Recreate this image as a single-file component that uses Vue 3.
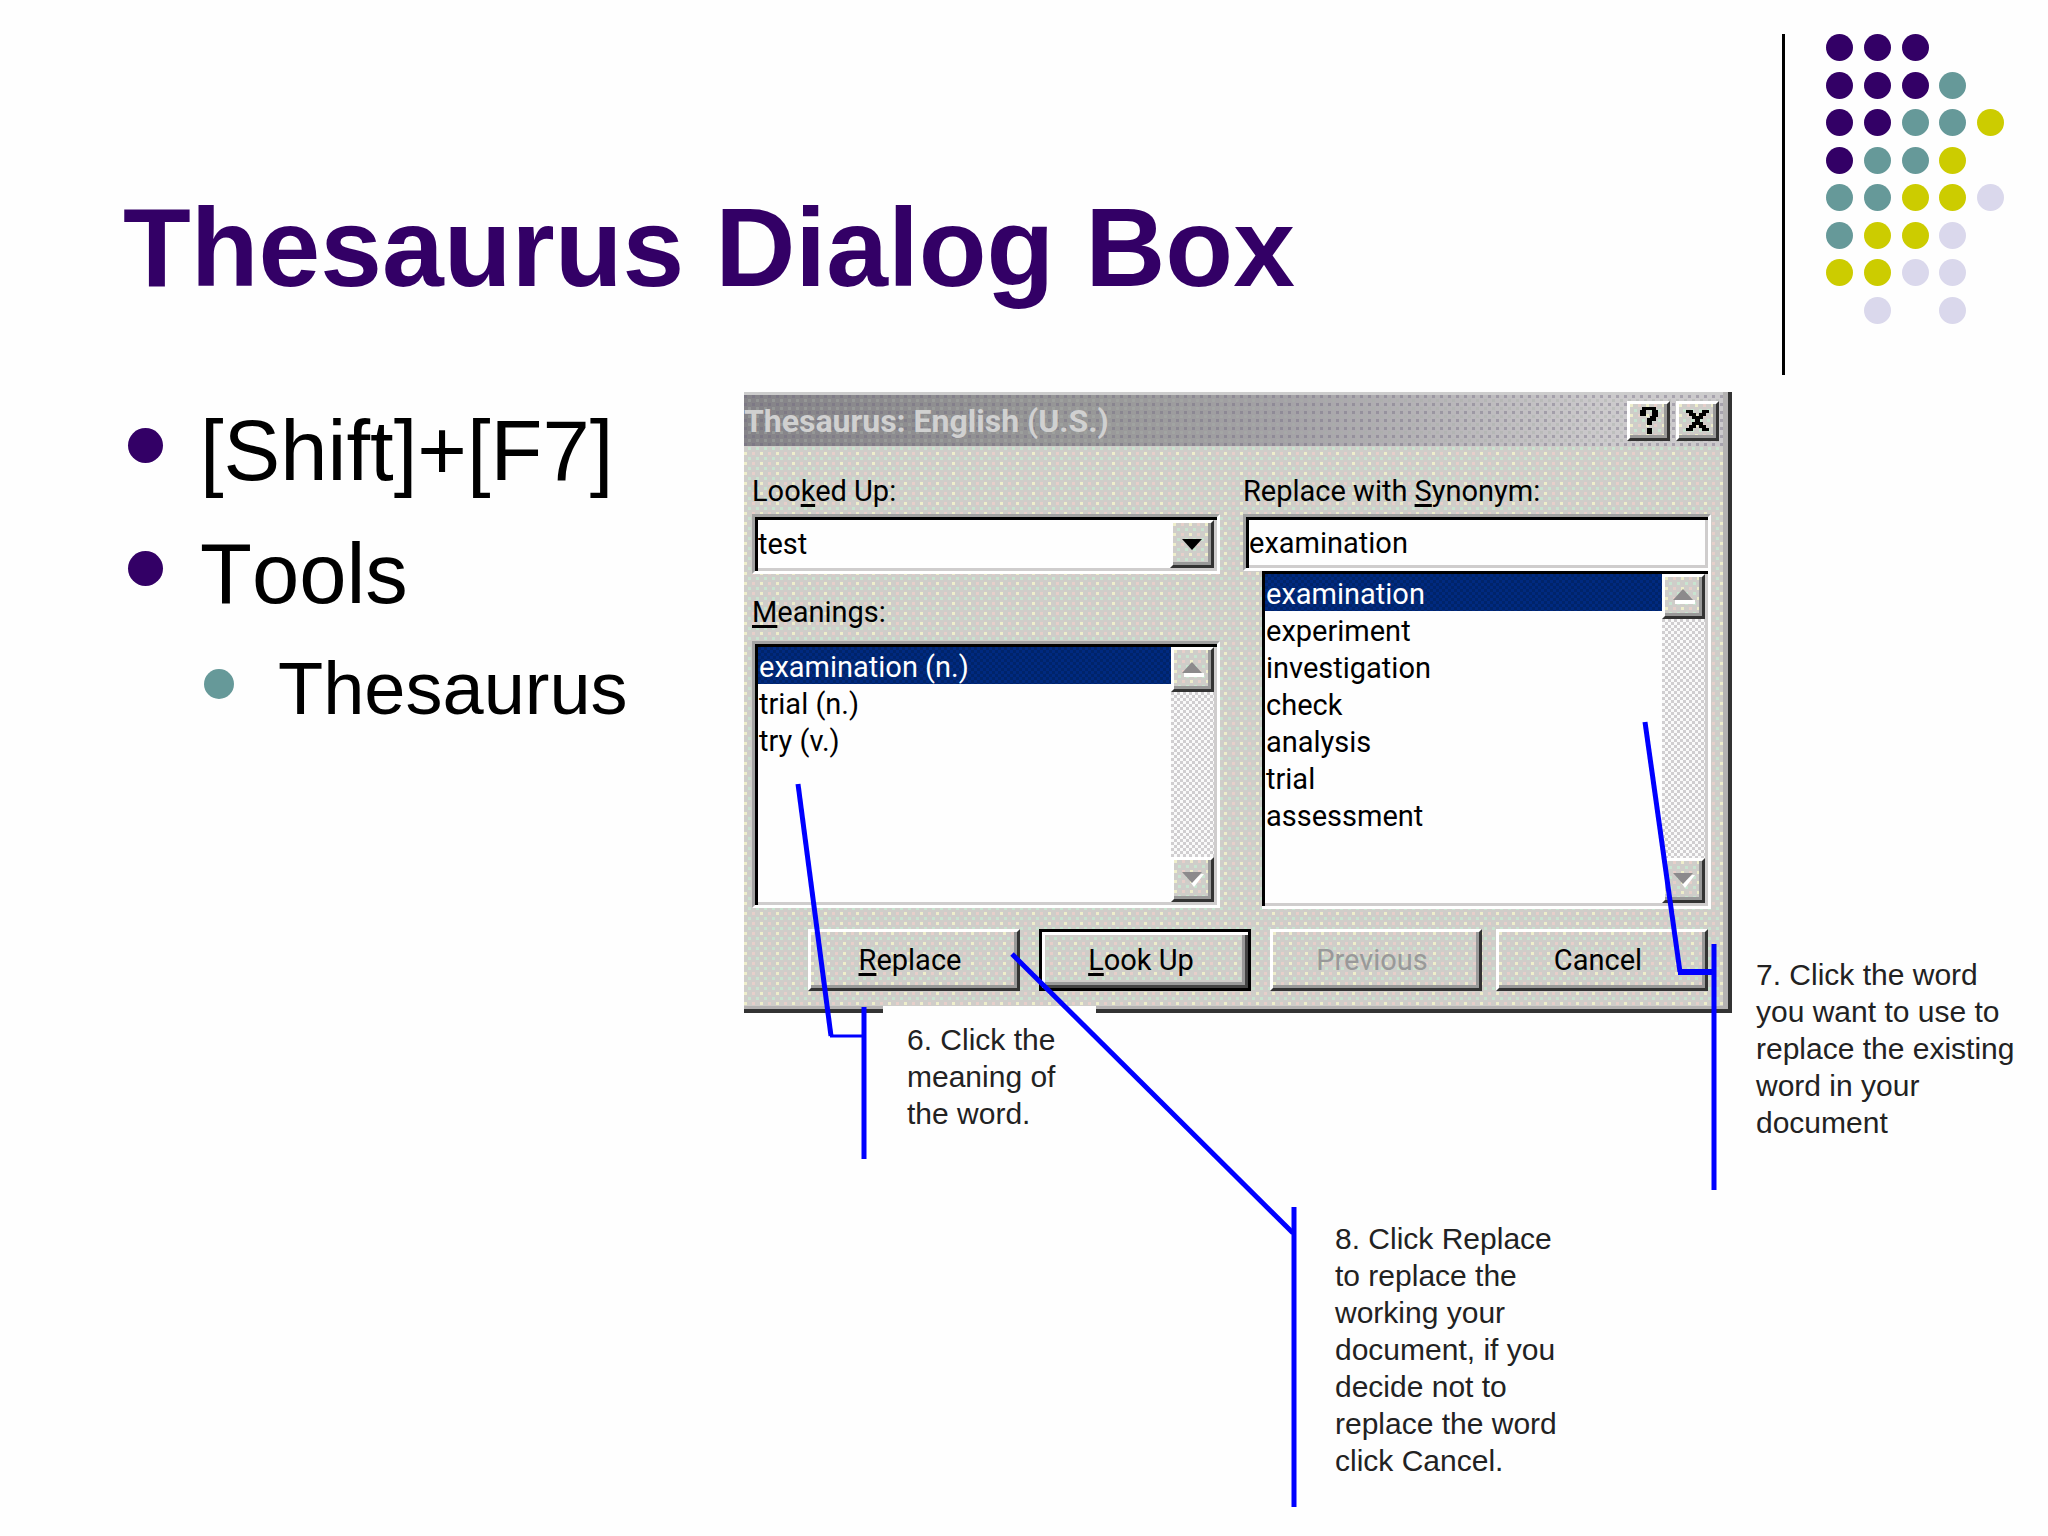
<script setup>
import { ref } from 'vue'

// p = purple, t = teal, y = yellow, l = lavender, '.' = empty cell
const dotRows = ['ppp..', 'pppt.', 'pptty', 'ptty.', 'ttyyl', 'tyyl.', 'yyll.', '.l.l.']
const dots = dotRows.join('').split('')

const meanings = ['examination (n.)', 'trial (n.)', 'try (v.)']
const synonyms = ['examination', 'experiment', 'investigation', 'check', 'analysis', 'trial', 'assessment']

const lookedUp = ref('test')
const meaning = ref(meanings[0])
const replacement = ref(synonyms[0])
</script>

<template>
  <main class="slide">
    <header class="head">
      <h1>Thesaurus Dialog Box</h1>
      <div class="ornament" aria-hidden="true">
        <div class="dots">
          <span v-for="(d, i) in dots" :key="i" class="dot" :class="'dot-' + d"></span>
        </div>
      </div>
    </header>

    <section class="content">
      <ul class="points">
        <li>[Shift]+[F7]</li>
        <li>
          Tools
          <ul class="subpoints">
            <li>Thesaurus</li>
          </ul>
        </li>
      </ul>

      <div class="figure">
        <form class="dialog" @submit.prevent>
          <div class="titlebar">
            <span class="caption">Thesaurus: English (U.S.)</span>
            <button type="button" class="raised tool" aria-label="Help">
              <svg viewBox="0 0 16 24" width="18" height="27" shape-rendering="crispEdges">
                <path d="M2 0h12v3h2v6h-2v3h-3v4H6v-6h3V8h2V3H5v5H0V3h2zM6 19h5v5H6z" />
              </svg>
            </button>
            <button type="button" class="raised tool" aria-label="Close">
              <svg viewBox="0 0 24 21" width="23" height="21" shape-rendering="crispEdges">
                <path d="M0 0h7v3h3v3h4V3h3V0h7v3h-3v3h-3v3h-3v3h3v3h3v3h3v3h-7v-3h-3v-3h-4v3H7v3H0v-3h3v-3h3v-3h3V9H6V6H3V3H0z" />
              </svg>
            </button>
          </div>

          <div class="columns">
            <div class="column">
              <label for="looked">Loo<u>k</u>ed Up:</label>
              <div class="sunken combo">
                <select id="looked" v-model="lookedUp">
                  <option>test</option>
                </select>
                <span class="raised drop" aria-hidden="true">
                  <svg viewBox="0 0 20 11" width="20" height="11"><path d="M0 0h20L10 11z" /></svg>
                </span>
              </div>
              <span id="meanings-label" class="label second"><u>M</u>eanings:</span>
              <div class="sunken list">
                <ul role="listbox" aria-labelledby="meanings-label">
                  <li
                    v-for="m in meanings"
                    :key="m"
                    role="option"
                    :aria-selected="m === meaning"
                    :class="{ selected: m === meaning }"
                    @click="meaning = m"
                  >{{ m }}</li>
                </ul>
                <div class="scroll">
                  <button type="button" class="raised" aria-label="Scroll meanings up">
                    <svg viewBox="0 0 22 15" width="22" height="15"><path class="lit" d="M2 11h20v4H2z" /><path d="M0 11 10 0l10 11z" /></svg>
                  </button>
                  <button type="button" class="raised" aria-label="Scroll meanings down">
                    <svg viewBox="0 0 22 15" width="22" height="15"><path class="lit" d="M22 2 12 15l-3-4 10-9z" /><path d="M0 0h20L10 11z" /></svg>
                  </button>
                </div>
              </div>
            </div>

            <div class="column">
              <label for="synonym">Replace with <u>S</u>ynonym:</label>
              <input id="synonym" v-model="replacement" class="sunken" type="text" />
              <div class="sunken list nested">
                <ul role="listbox" aria-label="Synonyms">
                  <li
                    v-for="s in synonyms"
                    :key="s"
                    role="option"
                    :aria-selected="s === replacement"
                    :class="{ selected: s === replacement }"
                    @click="replacement = s"
                  >{{ s }}</li>
                </ul>
                <div class="scroll">
                  <button type="button" class="raised" aria-label="Scroll synonyms up">
                    <svg viewBox="0 0 22 15" width="22" height="15"><path class="lit" d="M2 11h20v4H2z" /><path d="M0 11 10 0l10 11z" /></svg>
                  </button>
                  <button type="button" class="raised" aria-label="Scroll synonyms down">
                    <svg viewBox="0 0 22 15" width="22" height="15"><path class="lit" d="M22 2 12 15l-3-4 10-9z" /><path d="M0 0h20L10 11z" /></svg>
                  </button>
                </div>
              </div>
            </div>
          </div>

          <div class="actions">
            <button type="button" class="raised"><u>R</u>eplace</button>
            <button type="submit" class="raised default"><u>L</u>ook Up</button>
            <button type="button" class="raised" disabled>Previous</button>
            <button type="button" class="raised cancel">Cancel</button>
          </div>
        </form>

        <p class="callout meaning-note">6. Click the<br />meaning of<br />the word.</p>
        <p class="callout word-note">7. Click the word<br />you want to use to<br />replace the existing<br />word in your<br />document</p>
        <p class="callout replace-note">8. Click Replace<br />to replace the<br />working your<br />document, if you<br />decide not to<br />replace the word<br />click Cancel.</p>

        <svg class="pointers" viewBox="0 0 1304 1120" width="1304" height="1120" aria-hidden="true">
          <path d="M54 392 87 644" stroke-width="5" />
          <path d="M86 644H119" stroke-width="3" />
          <path d="M120 615V767" stroke-width="5" />
          <path d="M901 330 936 580" stroke-width="5" />
          <path d="M934 580H970" stroke-width="6" />
          <path d="M970 552V798" stroke-width="5" />
          <path d="M268 562 549 841" stroke-width="5" />
          <path d="M550 815V1115" stroke-width="5" />
        </svg>
      </div>
    </section>
  </main>
</template>

<style>
body {
  margin: 0;
  background: #fefefe;
}
</style>

<style scoped>
.slide {
  min-height: 100vh;
  box-sizing: border-box;
  font-family: "Liberation Sans", Arial, sans-serif;
  color: #000;
}

ul {
  list-style: none;
  margin: 0;
  padding: 0;
}

.head {
  display: flex;
  justify-content: space-between;
  align-items: flex-start;
  padding: 34px 44px 17px 123px;
}

h1 {
  margin: 158px 0 0;
  font-size: 111px;
  line-height: 112px;
  font-weight: 700;
  color: #330066;
}

.ornament {
  height: 341px;
  padding-left: 41px;
  border-left: 3px solid #000;
}

.dots {
  display: grid;
  grid-template-columns: repeat(5, 27px);
  justify-content: space-between;
  align-content: space-between;
  width: 178px;
  height: 290px;
}

.dot {
  width: 27px;
  height: 27px;
  border-radius: 50%;
}
.dot-p { background: #330066; }
.dot-t { background: #669999; }
.dot-y { background: #cccc00; }
.dot-l { background: #dad8ec; }

.content {
  display: grid;
  grid-template-columns: minmax(0, 1fr) 1304px;
}

.points {
  padding: 9px 0 0 128px;
  font-size: 85px;
  line-height: 100px;
  font-kerning: none;
}
.points li {
  position: relative;
  padding-left: 72px;
}
.points > li + li {
  margin-top: 23px;
}
.points li::before {
  content: "";
  position: absolute;
  left: 0;
  top: 27px;
  width: 35px;
  height: 35px;
  border-radius: 50%;
  background: #330066;
}
.points .subpoints {
  margin-top: 23px;
  font-size: 74px;
  line-height: 84px;
}
.points .subpoints li {
  margin-left: 4px;
  padding-left: 74px;
}
.points .subpoints li::before {
  top: 22px;
  width: 30px;
  height: 30px;
  background: #669999;
}

.figure {
  position: relative;
  min-height: 1120px;
}

/* Dialog surfaces share a dithered grey */
.dialog,
.raised {
  background-color: #cfcdc9;
  background-image:
    conic-gradient(from 270deg at 3px 3px, #eeeecb 90deg, transparent 0),
    conic-gradient(from 270deg at 3px 3px, #e6cfca 90deg, transparent 0),
    conic-gradient(from 270deg at 3px 3px, #c8e4d0 90deg, transparent 0);
  background-size: 16px 10px, 16px 10px, 8px 10px;
  background-position: 0 0, 8px 0, 4px 5px;
}

.dialog {
  width: 988px;
  box-sizing: border-box;
  border: solid #333;
  border-width: 0 4px 4px 0;
  box-shadow: inset -5px -3px #b4b2b2;
  font-family: Roboto, "Noto Sans", sans-serif;
  font-size: 29px;
  line-height: 34px;
}

.dialog button,
.dialog input,
.dialog select {
  box-sizing: border-box;
  margin: 0;
  font: inherit;
  color: #000;
  border-radius: 0;
}

.raised {
  display: flex;
  align-items: center;
  justify-content: center;
  padding: 0;
  border: 3px solid;
  border-color: #fff #333 #333 #fff;
  box-shadow: inset -3px -3px #999;
}

.titlebar {
  display: flex;
  align-items: center;
  gap: 6px;
  height: 51px;
  box-sizing: content-box;
  margin-right: 5px;
  padding-right: 4px;
  border-top: 3px solid #ccc;
  background-image:
    conic-gradient(from 270deg at 3px 3px, #70688066 90deg, transparent 0),
    conic-gradient(from 270deg at 3px 3px, #a8b0a866 90deg, transparent 0),
    linear-gradient(90deg, #858388, #989898 35%, #a4a2a6 55%, #cccacc 88%, #cccacc);
  background-size: 8px 8px, 8px 8px, 100% 100%;
  background-position: 0 0, 4px 4px, 0 0;
}
.caption {
  flex: 1;
  font-size: 32px;
  line-height: 38px;
  font-weight: 700;
  color: #d0d0d0;
}
.tool {
  width: 43px;
  height: 40px;
}

.columns {
  display: grid;
  grid-template-columns: 1fr 1fr;
  gap: 23px;
  padding: 28px 17px 0 8px;
}
.column {
  display: flex;
  flex-direction: column;
}
label,
.label {
  margin-bottom: 6px;
}
.second {
  margin: 21px 0 12px;
}
u {
  text-decoration-thickness: 3px;
  text-underline-offset: 3px;
  text-decoration-skip-ink: none;
}

.sunken {
  box-sizing: border-box;
  padding: 3px;
  border: 3px solid;
  border-color: #a2a2a2 #fff #fff #a2a2a2;
  background: #fefefe;
  box-shadow: inset 3px 3px #000, inset -3px -3px #cfcdcd;
}
input.sunken {
  height: 57px;
  padding: 0 3px;
}

.combo {
  position: relative;
  height: 60px;
}
.combo select {
  width: 100%;
  height: 100%;
  padding: 0 44px 0 0;
  border: 0;
  background: none;
  appearance: none;
}
.drop {
  position: absolute;
  top: 3px;
  right: 3px;
  bottom: 3px;
  width: 38px;
  pointer-events: none;
}

.list {
  display: flex;
  height: 267px;
}
.list.nested {
  height: 338px;
  margin-left: 19px;
  border-top-width: 0;
  border-left-width: 0;
}
.list ul {
  flex: 1;
}
.list li {
  padding: 3px 0 0 1px;
  line-height: 34px;
}
.list .selected {
  color: #fff;
  background: repeating-conic-gradient(#002a80 0 25%, #00246a 0 50%) 0 0 / 6px 6px;
}

.scroll {
  display: flex;
  flex-direction: column;
  justify-content: space-between;
  width: 43px;
  background: repeating-conic-gradient(#d0ced0 0 25%, #fafafa 0 50%) 0 0 / 6px 6px;
}
.scroll button {
  width: 43px;
  height: 45px;
}
.scroll path {
  fill: #8c8a8c;
}
.scroll .lit {
  fill: #fff;
}

.actions {
  display: flex;
  gap: 19px;
  padding: 20px 20px 18px 64px;
}
.actions button {
  flex: 1;
  height: 62px;
  padding-right: 8px;
}
.actions .default {
  border-color: #000;
  box-shadow: inset 3px 3px #fff, inset -3px -3px #444, inset -6px -6px #999;
}
.actions button:disabled {
  color: #999;
}
.actions .cancel {
  margin-left: -5px;
}

.callout {
  position: absolute;
  margin: 0;
  font-size: 30px;
  line-height: 37px;
  color: #222;
  white-space: nowrap;
}
.meaning-note {
  left: 139px;
  top: 614px;
  width: 189px;
  padding: 15px 0 0 24px;
  background: #fefefe;
}
.word-note {
  left: 1012px;
  top: 564px;
}
.replace-note {
  left: 591px;
  top: 828px;
}

.pointers {
  position: absolute;
  left: 0;
  top: 0;
  fill: none;
  stroke: #0000ff;
  pointer-events: none;
}

@media (max-width: 1700px) {
  .content {
    grid-template-columns: 1fr;
    row-gap: 40px;
  }
}
</style>
